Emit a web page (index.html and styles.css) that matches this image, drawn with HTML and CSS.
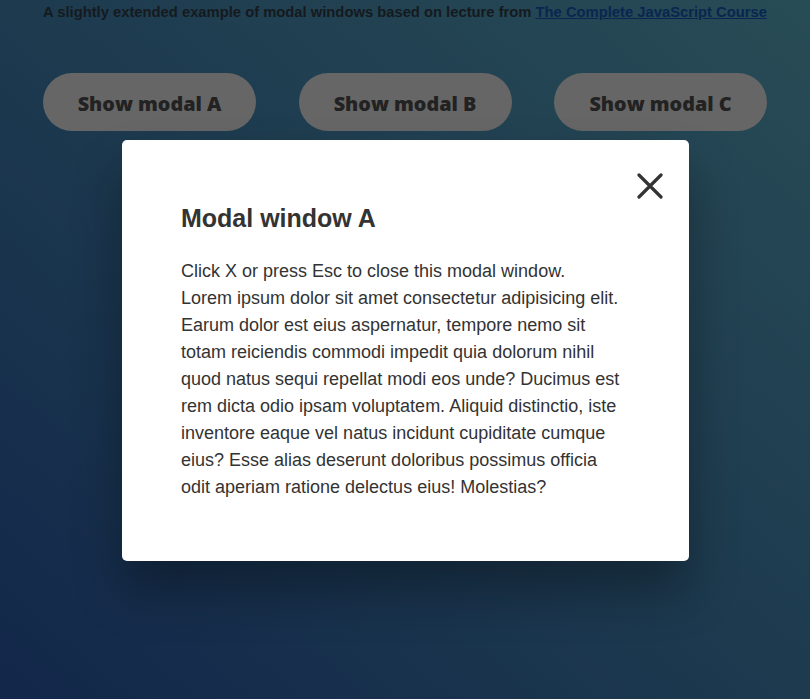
FILE: index.html
```html
<!DOCTYPE html>
<html lang="en">
<head>
<meta charset="utf-8">
<title>Modal window</title>
<link rel="stylesheet" href="styles.css">
</head>
<body>
  <p class="intro">A slightly extended example of modal windows based on lecture from <a href="#" class="intro-link">The Complete JavaScript Course</a></p>
  <div class="buttons">
    <button class="show-modal">Show modal A</button>
    <button class="show-modal">Show modal B</button>
    <button class="show-modal">Show modal C</button>
  </div>
  <div class="modal">
    <button class="close-modal" aria-label="Close">
      <svg width="26" height="26" viewBox="0 0 26 26"><path d="M2 2 L24 24 M24 2 L2 24" stroke="#333" stroke-width="3.2" stroke-linecap="round" fill="none"/></svg>
    </button>
    <h1 class="modal-title">Modal window A</h1>
    <p class="modal-text">Click X or press Esc to close this modal window.<br>Lorem ipsum dolor sit amet consectetur adipisicing elit. Earum dolor est eius aspernatur, tempore nemo sit totam reiciendis commodi impedit quia dolorum nihil quod natus sequi repellat modi eos unde? Ducimus est rem dicta odio ipsam voluptatem. Aliquid distinctio, iste inventore eaque vel natus incidunt cupiditate cumque eius? Esse alias deserunt doloribus possimus officia odit aperiam ratione delectus eius! Molestias?</p>
  </div>
</body>
</html>
```
FILE: styles.css
```css
* {
  box-sizing: border-box;
}
html, body {
  margin: 0;
  height: 100%;
}
body {
  font-family: "Liberation Sans", Arial, sans-serif;
  color: #333;
  line-height: 1.5;
  background: linear-gradient(to top right, #12274a 0%, #1d3a4f 50%, #284c56 100%);
  overflow: hidden;
  position: relative;
}
.intro {
  margin: 0;
  padding: 1px 43px 0;
  font-size: 14.77px;
  font-weight: 700;
  line-height: 22px;
  color: #151a1e;
  white-space: nowrap;
}
.intro-link {
  color: #08264f;
}
.buttons {
  display: flex;
  justify-content: space-between;
  padding: 0 43px;
  margin-top: 50px;
}
.show-modal {
  width: 213px;
  height: 58px;
  border: none;
  border-radius: 100px;
  background: #666;
  color: #222;
  font-family: "Open Sans", Lato, sans-serif;
  font-size: 19.8px;
  font-weight: 800;
  padding: 2px 0 0;
}
.modal {
  position: absolute;
  top: 140px;
  left: 122px;
  width: 567px;
  background: #fff;
  padding: 60px 60px 60px 59px;
  border-radius: 5px;
  box-shadow: 0 30px 50px rgba(0, 0, 0, 0.32);
}
.close-modal {
  position: absolute;
  top: 33px;
  right: 26px;
  width: 26px;
  height: 26px;
  padding: 0;
  border: none;
  background: none;
  display: block;
}
.close-modal svg {
  display: block;
}
.modal-title {
  margin: 0 0 20px;
  font-size: 25px;
  font-weight: 700;
  line-height: 1.5;
}
.modal-text {
  margin: 0;
  font-size: 18px;
  line-height: 1.5;
}
```
